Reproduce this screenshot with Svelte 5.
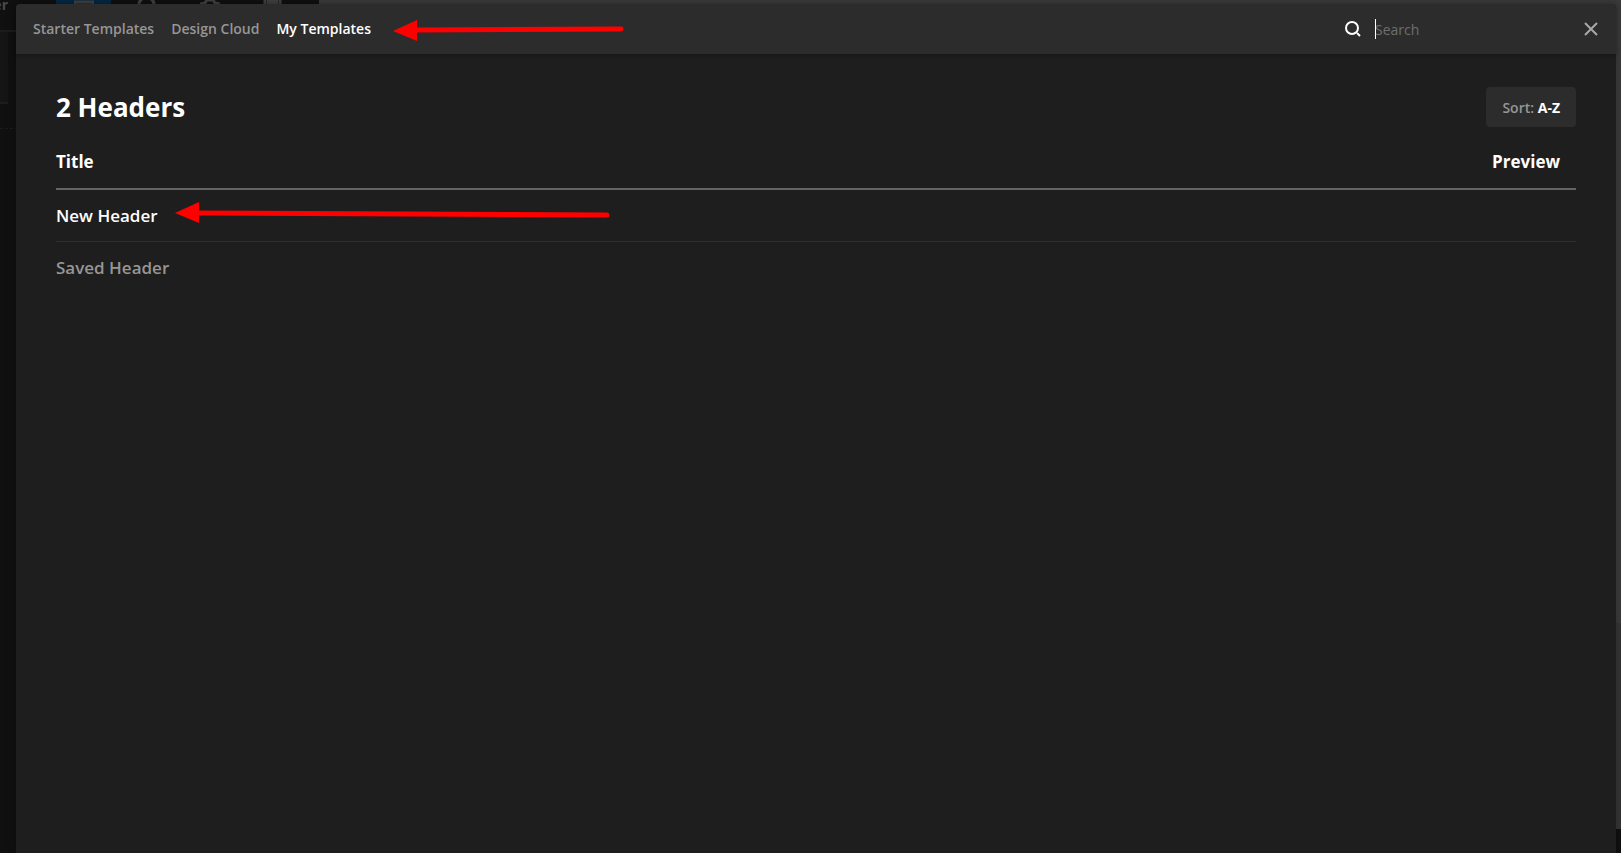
<script>
  let query = $state('');
  let activeTab = $state('My Templates');
  let ascending = $state(true);

  const tabs = ['Starter Templates', 'Design Cloud', 'My Templates'];

  const templates = [
    { title: 'New Header', active: true },
    { title: 'Saved Header', active: false }
  ];

  let rows = $derived(
    templates
      .filter((t) => t.title.toLowerCase().includes(query.toLowerCase()))
      .sort((a, b) => (ascending ? 1 : -1) * a.title.localeCompare(b.title))
  );
</script>

<div class="screen">
  <!-- Builder behind the modal, dimmed -->
  <div class="builder" aria-hidden="true">
    <div class="panel">
      <div class="panel__bar">
        <span class="panel__name">er</span>
        <span class="panel__tools">
          <span class="tool tool--active">
            <svg width="20" height="12" viewBox="0 0 20 12"><path d="M1 12V2h18v10" /></svg>
          </span>
          <span class="tool">
            <svg width="20" height="12" viewBox="0 0 20 12"><path d="M2 12V4q0-3 3-5M17 12V4q0-3-3-5" /></svg>
          </span>
          <span class="tool">
            <svg width="20" height="12" viewBox="0 0 20 12"><path d="M0 4l5-1 2-3h6l2 3 5 1" /></svg>
          </span>
          <span class="tool">
            <svg width="20" height="12" viewBox="0 0 20 12"><path d="M2 0v12M17 0v12M4 3h11M4 0h11" /></svg>
          </span>
        </span>
      </div>
      <div class="panel__group"></div>
      <div class="panel__dash"></div>
    </div>
    <div class="canvas">
      <div class="canvas__top"></div>
      <div class="canvas__body"></div>
      <div class="canvas__foot"></div>
    </div>
  </div>

  <div class="modal" role="dialog" aria-label="Templates">
    <header class="modal__header">
      <nav class="tabs">
        {#each tabs as tab}
          <button class="tab" class:tab--active={tab === activeTab} onclick={() => (activeTab = tab)}>{tab}</button>
        {/each}
        <svg class="arrow" width="232" height="24" viewBox="0 0 232 24" aria-hidden="true">
          <path class="arrow__line" d="M22 12L228 11" />
          <path class="arrow__head" d="M0 13L24 2V23Z" />
        </svg>
      </nav>

      <div class="search">
        <label for="search" aria-label="Search">
          <svg width="16" height="16" viewBox="0 0 16 16">
            <circle cx="7" cy="7" r="6" />
            <path d="M12 12l3 3" />
          </svg>
        </label>
        <span class="search__field">
          {#if !query}<span class="caret"></span>{/if}
          <input id="search" type="text" placeholder="Search" bind:value={query} />
        </span>
      </div>

      <button class="close" aria-label="Close">
        <svg width="14" height="14" viewBox="0 0 14 14"><path d="M1 1l12 12M13 1L1 13" /></svg>
      </button>
    </header>

    <main class="content">
      <div class="content__head">
        <h1>{rows.length} Headers</h1>
        <button class="sort" onclick={() => (ascending = !ascending)}>
          Sort: <strong>{ascending ? 'A-Z' : 'Z-A'}</strong>
        </button>
      </div>

      <table>
        <thead>
          <tr>
            <th scope="col">Title</th>
            <th scope="col" class="preview">Preview</th>
          </tr>
        </thead>
        <tbody>
          {#each rows as row}
            <tr>
              <td>
                <a href="#{row.title}" class:active={row.active}>
                  {row.title}
                  {#if row.active}
                    <svg class="arrow arrow--row" width="440" height="24" viewBox="0 0 440 24" aria-hidden="true">
                      <path class="arrow__line" d="M22 12L432 14" />
                      <path class="arrow__head" d="M0 12L24 1V22Z" />
                    </svg>
                  {/if}
                </a>
              </td>
              <td class="preview"></td>
            </tr>
          {/each}
        </tbody>
      </table>
    </main>
  </div>
</div>

<style>
  :global(body) {
    background: #111;
  }

  .screen {
    position: relative;
    display: flex;
    min-height: 100vh;
    box-sizing: border-box;
    padding: 4px 5px 0 16px;
    overflow: hidden;
    font-family: 'Segoe UI', 'Open Sans', 'Noto Sans', sans-serif;
    color: #fff;
  }

  button {
    padding: 0;
    border: 0;
    background: none;
    font: inherit;
    cursor: pointer;
  }

  /* Builder */
  .builder {
    position: absolute;
    inset: 0;
    display: flex;
  }
  .panel {
    width: 319px;
    background: #101010;
  }
  .panel__bar {
    display: flex;
    height: 30px;
    border-bottom: 2px solid #1c1c1c;
  }
  .panel__name {
    display: flex;
    justify-content: flex-end;
    width: 8px;
    margin-right: 48px;
    font-size: 14px;
    line-height: 10px;
    font-weight: 700;
    color: #4a4a4a;
  }
  .panel__tools {
    display: flex;
    gap: 8px;
  }
  .tool {
    display: flex;
    justify-content: center;
    width: 55px;
  }
  .tool--active {
    background: #042844;
  }
  .tool svg {
    fill: none;
    stroke: #404040;
    stroke-width: 3;
  }
  .panel__group {
    width: 8px;
    height: 70px;
    background: #151515;
    box-shadow: 0 2px #1c1c1c;
  }
  .panel__dash {
    height: 26px;
    border-bottom: 1px dashed #1c1c1c;
  }
  .canvas {
    flex: 1;
    display: flex;
    flex-direction: column;
    background: #343434;
  }
  .canvas__top {
    height: 73vh;
    background: #3a3a3a;
  }
  .canvas__body {
    flex: 1;
  }
  .canvas__foot {
    height: 24px;
    background: #101010;
  }

  /* Modal */
  .modal {
    position: relative;
    flex: 1;
    background: #1e1e1e;
    border-radius: 4px 4px 0 0;
    box-shadow: 0 0 12px rgba(0, 0, 0, 0.2);
  }
  .modal__header {
    display: flex;
    align-items: center;
    height: 50px;
    padding: 0 18px 0 17px;
    border-radius: 4px 4px 0 0;
    background: #2c2c2c;
    box-shadow: 0 1px 4px rgba(0, 0, 0, 0.3);
  }
  .tabs {
    position: relative;
    display: flex;
    gap: 17px;
    margin-right: auto;
  }
  .tab {
    font-size: 14px;
    line-height: 22px;
    font-weight: 600;
    color: #969696;
  }
  .tab--active {
    color: #fff;
  }
  .search {
    display: flex;
    align-items: center;
    gap: 14px;
    margin-right: 9px;
  }
  .search label {
    display: flex;
  }
  .search svg {
    fill: none;
    stroke: #fff;
    stroke-width: 2;
  }
  .search__field {
    position: relative;
    display: flex;
  }
  .caret {
    position: absolute;
    left: 0;
    width: 1px;
    height: 20px;
    background: #fff;
  }
  input {
    width: 200px;
    height: 20px;
    padding: 0;
    border: 0;
    outline: 0;
    background: none;
    font: inherit;
    font-size: 14px;
    color: #fff;
  }
  input::placeholder {
    color: #6e6e6e;
    opacity: 1;
  }
  .close {
    display: flex;
  }
  .close svg {
    fill: none;
    stroke: #a8a8a8;
    stroke-width: 2;
  }

  /* Content */
  .content {
    padding: 32px 40px;
  }
  .content__head {
    display: flex;
    align-items: center;
    justify-content: space-between;
  }
  h1 {
    margin: 0;
    font-size: 26px;
    line-height: 42px;
    font-weight: 700;
  }
  .sort {
    height: 40px;
    padding: 0 16px;
    border-radius: 4px;
    background: #2c2c2c;
    font-size: 14px;
    font-weight: 600;
    color: #969696;
  }
  .sort strong {
    font-weight: 700;
    color: #fff;
  }

  table {
    width: 100%;
    margin-top: 8px;
    border-collapse: separate;
    border-spacing: 0;
    font-size: 17px;
    line-height: 24px;
  }
  th {
    padding: 14px 0;
    border-bottom: 2px solid #646464;
    font-weight: 700;
    text-align: left;
  }
  td {
    padding: 14px 0 13px;
    border-bottom: 1px solid #2e2e2e;
  }
  tr:last-child td {
    border-bottom: 0;
  }
  th.preview,
  td.preview {
    padding-right: 16px;
    text-align: right;
  }
  td a {
    position: relative;
    font-weight: 600;
    color: #969696;
    text-decoration: none;
  }
  td a.active {
    color: #fff;
  }

  /* Pointer arrows */
  .arrow {
    position: absolute;
    left: 100%;
    top: 0;
    margin-left: 22px;
    pointer-events: none;
  }
  .arrow--row {
    top: -3px;
    margin-left: 17px;
  }
  .arrow__line {
    stroke: #f00;
    stroke-width: 5;
    stroke-linecap: round;
  }
  .arrow__head {
    fill: #f00;
  }
</style>
